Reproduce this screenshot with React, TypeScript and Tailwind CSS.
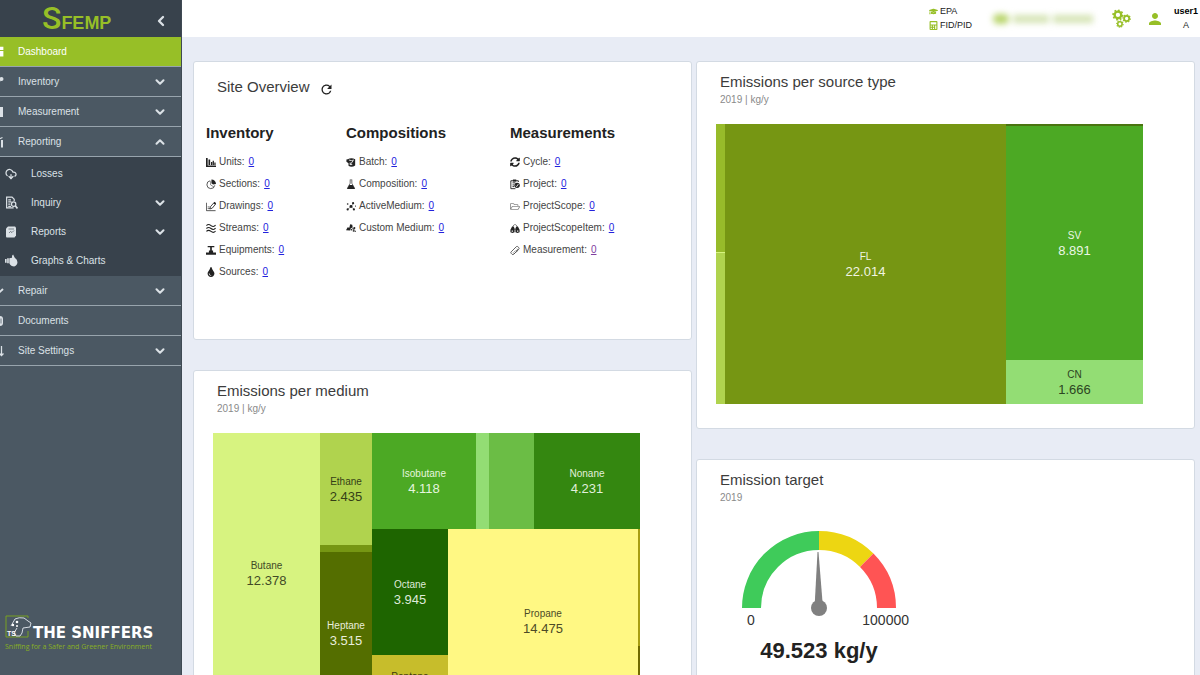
import React from 'react';
import { ChevronDown, ChevronLeft, ChevronUp, CloudDownload, Ruler } from 'lucide-react';
import { FaCalculator, FaGraduationCap, FaRegFolderOpen, FaSyncAlt, FaTint } from 'react-icons/fa';
import { MdDashboard, MdPerson, MdRefresh } from 'react-icons/md';

type IconProps = { children: React.ReactNode; size?: number };

const Icon = ({ children, size = 11 }: IconProps) => (
  <svg
    width={size}
    height={size}
    viewBox="0 0 24 24"
    fill="currentColor"
    stroke="currentColor"
    strokeWidth={0}
    aria-hidden="true"
  >
    {children}
  </svg>
);

const UnitsIcon = () => (
  <Icon>
    <path d="M0 1h4v18h20v4H0z" />
    <path d="M6 5h4v13H6zM12 11h3v7h-3zM16 8h3v10h-3zM20 12h3v6h-3z" />
  </Icon>
);

const SectionsIcon = () => (
  <Icon>
    <path d="M10 3a9.500 9.500 0 1 0 11 11" fill="none" strokeWidth={1.800} />
    <path d="M13 0a11 11 0 0 1 11 11l-7 1-4-3z" />
    <path d="M11 4v9l8 5" fill="none" strokeWidth={1.200} />
  </Icon>
);

const DrawingsIcon = () => (
  <Icon>
    <path d="M1 3v19h22" fill="none" strokeWidth={1.800} />
    <path d="M4 13h5M4 17h5" fill="none" strokeWidth={1.500} />
    <path d="M9 18l2-6L20 2l4 3-9 11z" fill="none" strokeWidth={2} />
    <path d="M18 5l2-4 4 3-2 3z" />
  </Icon>
);

const StreamsIcon = () => (
  <Icon>
    <path
      d="M1 5q5-5 11 0t11-1M1 12q5-5 11 0t11-1M1 19q5-5 11 0t11-1"
      fill="none"
      strokeWidth={2.600}
    />
  </Icon>
);

const ValveIcon = () => (
  <Icon>
    <path d="M4 1h16v3h-6v8h3v5h7v5H0v-5h7v-5h3V4H4z" />
  </Icon>
);

const BatchIcon = () => (
  <Icon>
    <path d="M4 4q9-5 18 0v15q-8 6-16 1v-6L1 10V5z" />
    <path d="M7 6q6 3 12 0M10 17l7-9M10 12v5h5" fill="none" stroke="white" strokeWidth={2} />
  </Icon>
);

const FlaskIcon = () => (
  <Icon>
    <path d="M9 1h6M10 2v7L4 20M14 2v7l6 11" fill="none" strokeWidth={1.600} />
    <path d="M8 13h8l6 10H2z" />
  </Icon>
);

const MoleculeIcon = () => (
  <Icon>
    <path d="M5 18l7-6 6-7M12 12l7 6" fill="none" strokeWidth={1.200} />
    <circle cx="12" cy="12" r="3.500" />
    <circle cx="17" cy="4" r="2.600" />
    <circle cx="4" cy="19" r="2.600" />
    <circle cx="19" cy="19" r="2.600" />
    <circle cx="4" cy="6" r="2" />
    <circle cx="23" cy="11" r="1.500" />
  </Icon>
);

const CustomMediumIcon = () => (
  <Icon>
    <path d="M0 16l4-7 4 1 2-8 5 1 1 6-5 3-1 5z" />
    <path d="M13 10l6 3M17 12l1 6M18 13l4 5" fill="none" strokeWidth={1.500} />
    <circle cx="13" cy="15" r="2" />
    <circle cx="20" cy="11" r="2.500" />
    <circle cx="18" cy="18" r="2" />
    <circle cx="22" cy="19" r="1.500" />
  </Icon>
);

const ProjectIcon = () => (
  <Icon>
    <path d="M20 6V3H2v19h11M6 8h7M6 13h4M6 17h4" fill="none" strokeWidth={2.200} />
    <path d="M7 0h8v5H7z" />
    <circle cx="17" cy="14" r="6.500" />
    <path d="M14 15l2 2 4-6" fill="none" stroke="white" strokeWidth={2} />
  </Icon>
);

const ScopeItemIcon = () => (
  <Icon>
    <path d="M1 21v-6l4-8h4l2 5v9l-5 2zM23 21v-6l-4-8h-4l-2 5v9l5 2z" />
    <path d="M7 7l4-5M17 7l-4-5M10 14h4" fill="none" strokeWidth={1.500} />
    <path d="M4 17h3v3H4zM17 17h3v3h-3z" fill="white" />
  </Icon>
);

const InquiryIcon = () => (
  <Icon size={13}>
    <path d="M17 9V6l-4-4H3v20h13M6 7h5M6 11h6M6 15h4M6 19h5" fill="none" strokeWidth={2.200} />
    <circle cx="16" cy="15" r="4" fill="none" strokeWidth={2.200} />
    <path d="M19 18l4 5" strokeWidth={3} />
  </Icon>
);

const ReportsIcon = () => (
  <Icon size={12}>
    <path d="M6 1h14l2 2v16l-3 4H3l-1-2V5z" />
    <path d="M7 6h11M8 14l3-3 3 2 4-4" fill="none" stroke="#38424c" strokeWidth={1.200} />
  </Icon>
);

const GraphsIcon = () => (
  <Icon size={13}>
    <path d="M0 9h3v7H0zM4 8h3v9H4zM8 8l5-1V3l2-2 3 6q5 3 5 8t-6 8q-6 0-9-6z" />
  </Icon>
);

const PipeIcon = () => (
  <Icon size={12}>
    <path d="M2 20L16 9" strokeWidth={3} />
    <circle cx="19" cy="6" r="4" />
  </Icon>
);

const MeterIcon = () => (
  <Icon size={12}>
    <path d="M4 2h18v20H4z" />
  </Icon>
);

const ReportingIcon = () => (
  <Icon size={12}>
    <path d="M6 12h4v11H6zM12 9h4v14h-4zM18 8h4v15h-4z" />
    <path d="M10 8l11-5" strokeWidth={2.500} />
  </Icon>
);

const RepairIcon = () => (
  <Icon size={12}>
    <path d="M4 14l6 5L22 8" fill="none" strokeWidth={4} />
  </Icon>
);

const DocumentsIcon = () => (
  <Icon size={12}>
    <rect x="5" y="2" width="17" height="20" rx="6" />
    <path d="M18 7v10" stroke="#4b5863" strokeWidth={1.500} />
  </Icon>
);

const SettingsIcon = () => (
  <Icon size={12}>
    <path d="M11 2v20M19 2v18M15 17l4 4 4-4" fill="none" strokeWidth={2.500} />
  </Icon>
);

const Gear = ({ cx, cy, r }: { cx: number; cy: number; r: number }) => (
  <g>
    <circle cx={cx} cy={cy} r={r} fill="none" strokeWidth={r * 0.7} />
    <circle
      cx={cx}
      cy={cy}
      r={r * 1.45}
      fill="none"
      strokeWidth={r * 0.5}
      pathLength={16}
      strokeDasharray="1 1"
    />
  </g>
);

const GearsIcon = () => (
  <Icon size={19}>
    <Gear cx={7.5} cy={7.5} r={4.2} />
    <Gear cx={18.500} cy={12} r={3.2} />
    <Gear cx={10} cy={19} r={2.8} />
  </Icon>
);

const menuRow =
  'relative flex h-[30px] w-full items-center border-b border-[#98a4ad] pl-[18px] pr-[14px] text-left';

type MenuItemProps = {
  label: string;
  icon: React.ReactNode;
  active?: boolean;
  open?: boolean;
  plain?: boolean;
};

const MenuItem = ({ label, icon, active, open, plain }: MenuItemProps) => {
  const content = (
    <>
      <span className="absolute -left-2">{icon}</span>
      <span className="flex-1">{label}</span>
      {!plain && (open ? <ChevronUp size={14} strokeWidth={3.5} /> : <ChevronDown size={14} strokeWidth={3.5} />)}
    </>
  );
  if (plain) {
    return (
      <a href="#" className={`${menuRow} ${active ? 'bg-[#97bf27] text-white' : ''}`}>
        {content}
      </a>
    );
  }
  return (
    <button type="button" aria-expanded={!!open} className={menuRow}>
      {content}
    </button>
  );
};

const subRow = 'flex h-[29px] w-full items-center pl-[5px] pr-[14px] text-left';

const SubItem = ({ label, icon, expandable }: { label: string; icon: React.ReactNode; expandable?: boolean }) => {
  const content = (
    <>
      <span className="w-[26px]">{icon}</span>
      <span className="flex-1">{label}</span>
      {expandable && <ChevronDown size={14} strokeWidth={3.5} />}
    </>
  );
  return expandable ? (
    <button type="button" aria-expanded={false} className={subRow}>{content}</button>
  ) : (
    <a href="#" className={subRow}>{content}</a>
  );
};

const Sidebar = () => (
  <aside className="flex w-[182px] flex-none flex-col overflow-hidden border-r border-[#3f4a54] bg-[#4b5863] text-[10px] text-[#dbe1e6]">
    <div className="flex h-[37px] flex-none items-center bg-[#38424c] pl-[42px] pr-[12px]">
      <div className="flex flex-1 items-baseline text-[#97bf27]">
        <span className="font-['Roboto',sans-serif] text-[32px] font-medium leading-[34px]">S</span>
        <span className="text-[18px] font-bold">FEMP</span>
      </div>
      <button type="button" aria-label="Collapse menu" className="pt-1">
        <ChevronLeft size={16} strokeWidth={3.5} />
      </button>
    </div>

    <nav>
      <MenuItem label="Dashboard" icon={<MdDashboard size={13} />} active plain />
      <MenuItem label="Inventory" icon={<PipeIcon />} />
      <MenuItem label="Measurement" icon={<MeterIcon />} />
      <MenuItem label="Reporting" icon={<ReportingIcon />} open />
      <div className="bg-[#38424c] pb-px pt-[2px]">
        <SubItem label="Losses" icon={<CloudDownload size={12} strokeWidth={2.5} />} />
        <SubItem label="Inquiry" icon={<InquiryIcon />} expandable />
        <SubItem label="Reports" icon={<ReportsIcon />} expandable />
        <SubItem label="Graphs & Charts" icon={<GraphsIcon />} />
      </div>
      <MenuItem label="Repair" icon={<RepairIcon />} />
      <MenuItem label="Documents" icon={<DocumentsIcon />} plain />
      <MenuItem label="Site Settings" icon={<SettingsIcon />} />
    </nav>

    <div className="mt-auto pb-[23px] pl-[5px]">
      <div className="flex items-end">
        <div className="relative h-[23px] w-7">
          <svg width="28" height="23" viewBox="0 0 28 23" fill="none" aria-hidden="true">
            <path d="M23 3V1H1v21h22v-6" stroke="#78a022" />
            <path
              d="M6 11L10 4q4-2 9-1l4 3 3 2-1 4-7 1-1 5-2 3h-4l-2-3 3-5"
              stroke="#d5dbe2"
              strokeWidth="1"
            />
            <circle cx="8" cy="10" r="1.200" fill="white" />
            <circle cx="12" cy="7" r="1.300" fill="white" />
            <circle cx="12" cy="11" r="1" fill="white" />
          </svg>
          <span className="absolute bottom-0 left-[2px] text-[7px] font-bold leading-[8px] text-white">TS</span>
        </div>
        <span className="whitespace-nowrap font-['DejaVu_Sans',sans-serif] text-[15px] font-bold leading-[10px] text-white">
          THE SNIFFERS
        </span>
      </div>
      <p className="mt-1 whitespace-nowrap font-['Open_Sans',sans-serif] text-[7px] leading-[10px] text-[#88b022]">
        Sniffing for a Safer and Greener Environment
      </p>
    </div>
  </aside>
);

const TopBar = () => (
  <header className="flex h-[37px] flex-none items-center justify-end bg-white text-[9px] text-[#222222]">
    <div className="w-[64px] pb-px leading-[14px]">
      <div className="flex items-center gap-[2px]">
        <FaGraduationCap size={9} className="text-[#97bf27]" /> EPA
      </div>
      <div className="flex items-center gap-[2px]">
        <FaCalculator size={9} className="text-[#97bf27]" /> FID/PID
      </div>
    </div>
    {/* obscured site name */}
    <div className="flex w-[119px] items-center gap-1 blur-[3px]" aria-hidden="true">
      <span className="h-[10px] w-4 rounded-full bg-[#b9d56c]" />
      <span className="h-2 w-9 bg-[#d5e4b4]" />
      <span className="h-2 w-10 bg-[#d5e4b4]" />
    </div>
    <button type="button" aria-label="Settings" className="w-[34px] text-[#97bf27]">
      <GearsIcon />
    </button>
    <button type="button" aria-label="Account" className="w-[26px] text-[#97bf27]">
      <MdPerson size={18} />
    </button>
    <div className="w-[28px] pb-[2px] text-center leading-[14px]">
      <div className="font-bold text-black">user1</div>
      <div>A</div>
    </div>
  </header>
);

const Card = ({ title, subtitle, children }: { title: string; subtitle: string; children: React.ReactNode }) => (
  <section className="rounded-[3px] border border-[#d3dae3] bg-white pb-6 pt-[10px]">
    <h2 className="pl-[23px] text-[15px] leading-5 text-[#3c3c3c]">{title}</h2>
    <p className="pl-[23px] text-[10px] leading-4 text-[#8a8a8a]">{subtitle}</p>
    {children}
  </section>
);

const groups = [
  {
    title: 'Inventory',
    items: [
      { label: 'Units', icon: <UnitsIcon /> },
      { label: 'Sections', icon: <SectionsIcon /> },
      { label: 'Drawings', icon: <DrawingsIcon /> },
      { label: 'Streams', icon: <StreamsIcon /> },
      { label: 'Equipments', icon: <ValveIcon /> },
      { label: 'Sources', icon: <FaTint size={10} /> },
    ],
  },
  {
    title: 'Compositions',
    items: [
      { label: 'Batch', icon: <BatchIcon /> },
      { label: 'Composition', icon: <FlaskIcon /> },
      { label: 'ActiveMedium', icon: <MoleculeIcon /> },
      { label: 'Custom Medium', icon: <CustomMediumIcon /> },
    ],
  },
  {
    title: 'Measurements',
    items: [
      { label: 'Cycle', icon: <FaSyncAlt size={10} /> },
      { label: 'Project', icon: <ProjectIcon /> },
      { label: 'ProjectScope', icon: <FaRegFolderOpen size={11} className="text-[#888888]" /> },
      { label: 'ProjectScopeItem', icon: <ScopeItemIcon /> },
      { label: 'Measurement', icon: <Ruler size={11} className="rotate-90 text-[#444444]" />, visited: true },
    ],
  },
];

const SiteOverview = () => (
  <section className="min-h-[279px] rounded-[3px] border border-[#d3dae3] bg-white pl-3 pt-[15px]">
    <div className="flex items-center gap-[9px] pl-[11px]">
      <h2 className="text-[15px] leading-5 text-[#3c3c3c]">Site Overview</h2>
      <button type="button" aria-label="Refresh" className="pt-1 text-[#222222]">
        <MdRefresh size={15} />
      </button>
    </div>
    <div className="mt-[26px] grid grid-cols-[140px_164px_1fr]">
      {groups.map((group) => (
        <div key={group.title}>
          <h3 className="mb-2 text-[15px] font-bold leading-5 text-[#222222]">{group.title}</h3>
          <ul className="text-[10px] leading-[22px] text-[#444444]">
            {group.items.map((item) => (
              <li key={item.label} className="flex items-center gap-[3px]">
                <span className="flex w-[10px] flex-none justify-center text-[#222222]">{item.icon}</span>
                <span>{item.label}:</span>
                <a href="#" className={`pl-px underline ${'visited' in item ? 'text-[#8040a0]' : 'text-[#2222dd]'}`}>
                  0
                </a>
              </li>
            ))}
          </ul>
        </div>
      ))}
    </div>
  </section>
);

const Tile = ({ name, value, className }: { name?: string; value?: string; className: string }) => (
  <div className={`flex flex-col items-center justify-center overflow-hidden ${className}`}>
    {name && <span className="text-[10px] leading-[15px]">{name}</span>}
    {value && <span className="text-[13px] leading-[15px]">{value}</span>}
  </div>
);

const SourceTreemap = () => (
  <div className="ml-[19px] mt-4 flex h-[280px] w-[427px]">
    <div className="flex w-[9px] flex-col">
      <Tile className="h-[128px] bg-[#97bb2a]" />
      <Tile className="flex-1 border-t border-[#d7f380] bg-[#b0d34e]" />
    </div>
    <Tile name="FL" value="22.014" className="flex-1 bg-[#769613] text-[#f1f4e2]" />
    <div className="flex w-[137px] flex-col">
      <Tile className="h-[2px] bg-[#4a7410]" />
      <Tile name="SV" value="8.891" className="flex-1 bg-[#4ca924] text-[#eaf7e4]" />
      <Tile name="CN" value="1.666" className="h-11 bg-[#93dd74] text-[#2c4522]" />
    </div>
  </div>
);

const MediumTreemap = () => (
  <div className="ml-[19px] mt-4 flex h-[280px] w-[427px]">
    <Tile name="Butane" value="12.378" className="w-[107px] bg-[#d7f380] text-[#414a26]" />
    <div className="flex w-[52px] flex-col">
      <Tile name="Ethane" value="2.435" className="h-[112px] bg-[#b0d34e] text-[#353f17]" />
      <Tile className="h-[7px] bg-[#769613]" />
      <Tile name="Heptane" value="3.515" className="flex-1 bg-[#546e00] text-[#e9eddc]" />
    </div>
    <div className="flex flex-1 flex-col">
      <div className="flex h-[96px]">
        <Tile name="Isobutane" value="4.118" className="w-[104px] bg-[#4ca924] text-[#e6f5df]" />
        <Tile className="w-[13px] bg-[#93dd74]" />
        <Tile className="w-[45px] bg-[#6bbd45]" />
        <Tile name="Nonane" value="4.231" className="flex-1 bg-[#348710] text-[#e1efdc]" />
      </div>
      <div className="flex flex-1">
        <div className="flex w-[76px] flex-col">
          <Tile name="Octane" value="3.945" className="h-[126px] bg-[#1e6500] text-[#dfeada]" />
          <Tile name="Pentane" value="2.018" className="flex-1 bg-[#c7bd2b] text-[#3c390d]" />
        </div>
        <Tile name="Propane" value="14.475" className="flex-1 bg-[#fff883] text-[#4c4a27]" />
        <div className="flex w-[2px] flex-col">
          <Tile className="h-[117px] bg-[#a89e12]" />
          <Tile className="flex-1 bg-[#706a00]" />
        </div>
      </div>
    </div>
  </div>
);

const Gauge = () => (
  <div className="ml-8 mt-[25px] w-[180px]">
    <svg width="154" height="80" viewBox="0 0 154 80" className="mx-auto overflow-visible" aria-hidden="true">
      <g fill="none" strokeWidth="19">
        <path d="M9.500 77A67.500 67.500 0 0 1 77 9.500" stroke="#3fcb5a" />
        <path d="M77 9.500A67.500 67.500 0 0 1 124.730 29.270" stroke="#edd612" />
        <path d="M124.730 29.270A67.500 67.500 0 0 1 144.500 77" stroke="#ff5454" />
      </g>
      <path d="M75.500 21h1l4.500 56h-8.500z" fill="#808080" />
      <circle cx="77" cy="77" r="8" fill="#808080" />
    </svg>
    <div className="flex justify-between pl-[18px] text-[14px] leading-[18px] text-[#333333]">
      <span>0</span>
      <span>100000</span>
    </div>
    <p className="mt-[8px] text-center text-[22px] font-bold leading-7 text-[#222222]">49.523 kg/y</p>
  </div>
);

const App: React.FC = () => {
  return (
    <div className="flex h-screen overflow-hidden bg-[#e8ecf5] font-['Liberation_Sans',Arial,sans-serif]">
      <Sidebar />
      <div className="flex min-w-0 flex-1 flex-col">
        <TopBar />
        <main className="grid flex-1 grid-cols-2 items-start gap-1 overflow-y-auto pb-6 pl-[11px] pr-[5px] pt-6 [scrollbar-width:none]">
          <div className="flex flex-col gap-[30px]">
            <SiteOverview />
            <Card title="Emissions per medium" subtitle="2019 | kg/y">
              <MediumTreemap />
            </Card>
          </div>
          <div className="flex flex-col gap-[30px]">
            <Card title="Emissions per source type" subtitle="2019 | kg/y">
              <SourceTreemap />
            </Card>
            <Card title="Emission target" subtitle="2019">
              <Gauge />
            </Card>
          </div>
        </main>
      </div>
    </div>
  );
};

export default App;
